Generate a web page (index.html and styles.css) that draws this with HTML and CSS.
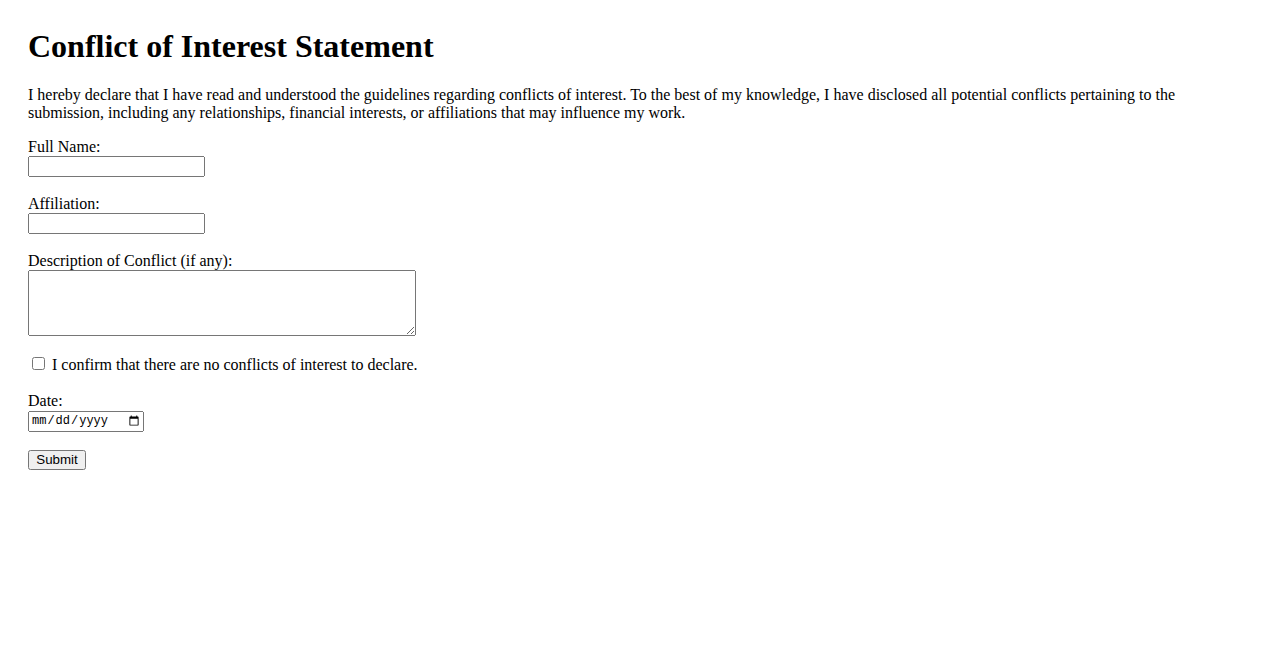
FILE: index.html
```html
<!DOCTYPE html>
<html lang="en">
<head>
    <meta charset="UTF-8">
    <meta name="viewport" content="width=device-width, initial-scale=1.0">
    <title>Conflict of Interest Statement</title>
    <link rel="stylesheet" href="styles.css">
</head>
<body>
    <h1>Conflict of Interest Statement</h1>
    <p>I hereby declare that I have read and understood the guidelines regarding conflicts of interest. To the best of my knowledge, I have disclosed all potential conflicts pertaining to the submission, including any relationships, financial interests, or affiliations that may influence my work.</p>

    <form class="coi-form">
        <label for="fullName">Full Name:</label><br>
        <input type="text" id="fullName" name="fullName"><br><br>

        <label for="affiliation">Affiliation:</label><br>
        <input type="text" id="affiliation" name="affiliation"><br><br>

        <label for="conflict">Description of Conflict (if any):</label><br>
        <textarea id="conflict" name="conflict" class="conflict-box"></textarea><br><br>

        <input type="checkbox" id="noConflict" name="noConflict">
        <label for="noConflict">I confirm that there are no conflicts of interest to declare.</label><br><br>

        <label for="date">Date:</label><br>
        <input type="date" id="date" name="date"><br><br>

        <button type="submit">Submit</button>
    </form>
</body>
</html>
```

FILE: styles.css
```css
body {
    margin: 0;
    padding: 28px;
    font-family: "Liberation Serif", "Times New Roman", serif;
    font-size: 16px;
}
h1 {
    margin: 0 0 21px 0;
    font-size: 32px;
}
p {
    margin: 0 0 16px 0;
}
input, textarea, button {
    font-family: "Liberation Sans", Arial, sans-serif;
}
input[type="text"] {
    width: 177px;
    height: 21px;
    box-sizing: border-box;
}
.conflict-box {
    width: 388px;
    height: 66px;
    box-sizing: border-box;
    vertical-align: bottom;
    font-family: "Liberation Mono", monospace;
}
input[type="date"] {
    width: 116px;
    height: 21px;
    box-sizing: border-box;
    font-family: "Liberation Mono", monospace;
    font-size: 12px;
}
button {
    width: 58px;
    height: 20px;
    padding: 0;
    vertical-align: bottom;
}
```
